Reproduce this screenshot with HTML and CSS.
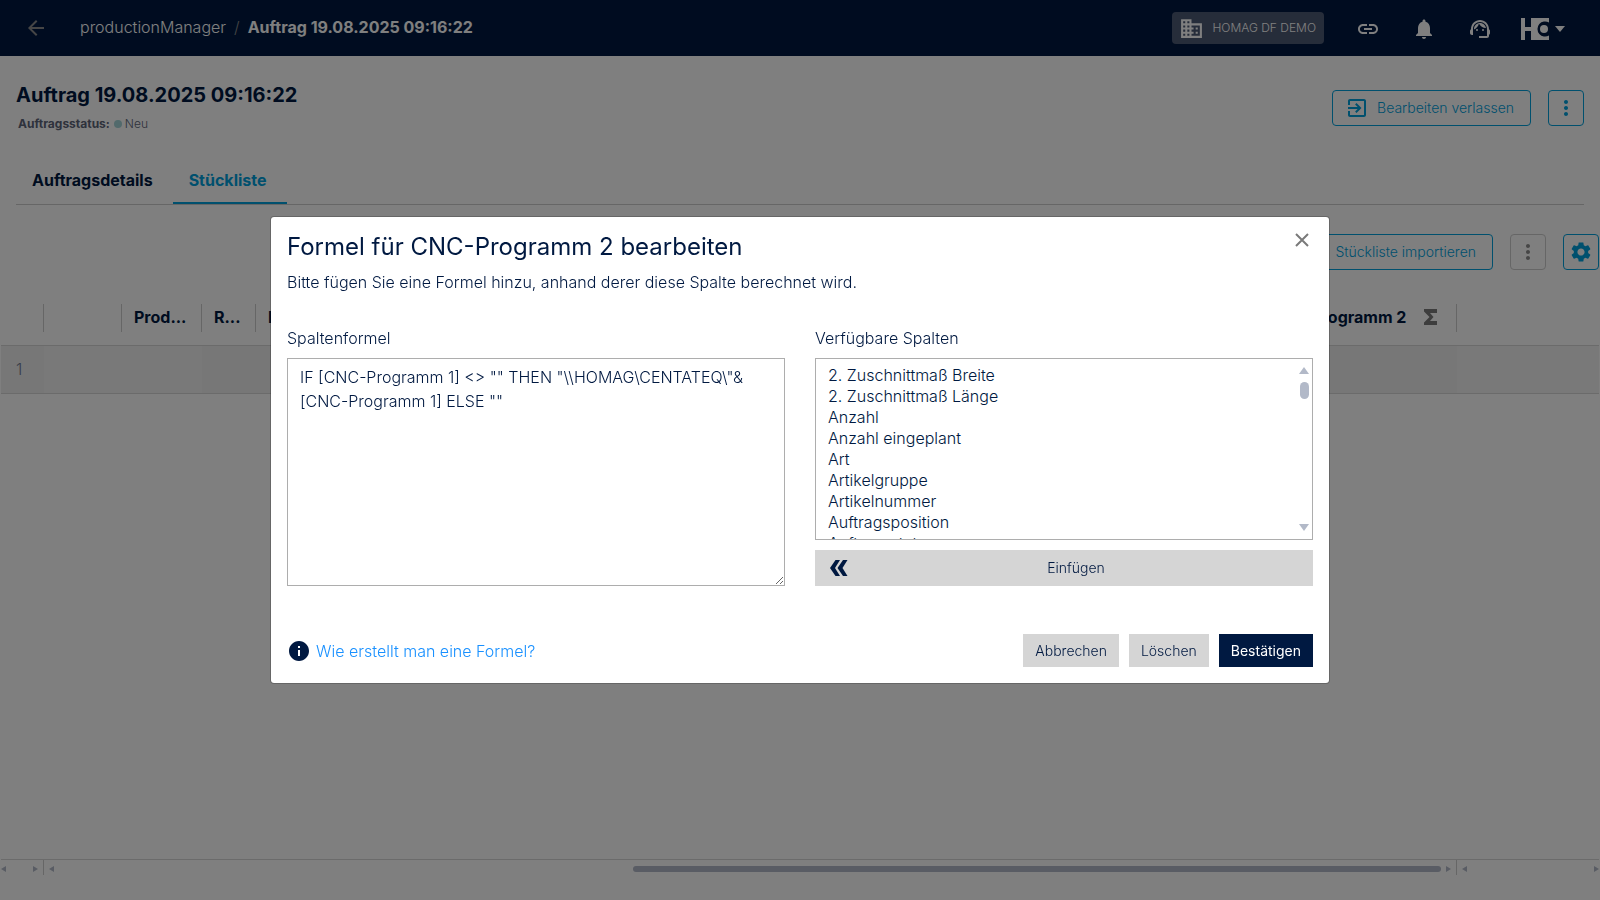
FILE: index.html
```html
<!DOCTYPE html>
<html lang="de">
<head>
  <meta charset="utf-8">
  <meta name="viewport" content="width=device-width, initial-scale=1">
  <title>productionManager</title>
  <link rel="stylesheet" href="styles.css">
</head>
<body>

<div class="app">
  <header class="topbar">
    <button class="icon-btn back" aria-label="Zurück">
      <svg width="24" height="24" viewBox="0 0 24 24"><path d="M20 11H7.83l5.59-5.59L12 4l-8 8 8 8 1.41-1.41L7.83 13H20v-2z"/></svg>
    </button>
    <nav class="breadcrumb">
      <a href="#">productionManager</a>
      <span class="slash">/</span>
      <strong>Auftrag 19.08.2025 09:16:22</strong>
    </nav>
    <button class="tenant">
      <svg width="25" height="25" viewBox="0 0 24 24"><path d="M12 7V3H2v18h20V7H12zM6 19H4v-2h2v2zm0-4H4v-2h2v2zm0-4H4V9h2v2zm0-4H4V5h2v2zm4 12H8v-2h2v2zm0-4H8v-2h2v2zm0-4H8V9h2v2zm0-4H8V5h2v2zm10 12h-8v-2h2v-2h-2v-2h2v-2h-2V9h8v10zm-2-8h-2v2h2v-2zm0 4h-2v2h2v-2z"/></svg>
      HOMAG DF DEMO
    </button>
    <div class="topbar-icons">
      <button class="icon-btn" aria-label="Links">
        <svg width="24" height="24" viewBox="0 0 24 24"><path d="M3.9 12c0-1.71 1.39-3.1 3.1-3.1h4V7H7c-2.76 0-5 2.24-5 5s2.24 5 5 5h4v-1.900H7c-1.710 0-3.100-1.390-3.100-3.100zM8 13h8v-2H8v2zm9-6h-4v1.900h4c1.710 0 3.100 1.390 3.100 3.100s-1.390 3.100-3.100 3.100h-4V17h4c2.760 0 5-2.240 5-5s-2.240-5-5-5z"/></svg>
      </button>
      <button class="icon-btn" aria-label="Benachrichtigungen">
        <svg width="24" height="24" viewBox="0 0 24 24"><path d="M12 22c1.100 0 2-.9 2-2h-4c0 1.100.89 2 2 2zm6-6v-5c0-3.070-1.640-5.640-4.500-6.320V4c0-.83-.67-1.500-1.500-1.500s-1.500.67-1.500 1.500v.68C7.630 5.360 6 7.920 6 11v5l-2 2v1h16v-1l-2-2z"/></svg>
      </button>
      <button class="icon-btn" aria-label="Support">
        <svg width="24" height="24" viewBox="0 0 24 24"><path d="M21 12.220C21 6.730 16.740 3 12 3c-4.690 0-9 3.650-9 9.280-.6.340-1 .98-1 1.720v2c0 1.100.9 2 2 2h1v-6.100c0-3.870 3.130-7 7-7s7 3.130 7 7V19h-8v2h8c1.100 0 2-.9 2-2v-1.220c.59-.31 1-.92 1-1.640v-2.300c0-.7-.41-1.310-1-1.620z"/><circle cx="9" cy="13" r="1"/><circle cx="15" cy="13" r="1"/><path d="M18 11.030C17.520 8.180 15.040 6 12.050 6c-3.030 0-6.290 2.510-6.030 6.450 2.470-1.010 4.330-3.210 4.860-5.890 1.310 2.630 4 4.440 7.120 4.470z"/></svg>
      </button>
      <button class="icon-btn logo" aria-label="HOMAG">
        <svg width="28" height="22" viewBox="0 0 28 22"><path d="M0 0h4v9h6V0h18v4.500A7.600 7.600 0 1 0 28 17.500V22H10v-9H4v9H0z"/><circle cx="23" cy="11" r="4"/></svg>
        <svg width="10" height="6" viewBox="0 0 10 6"><path d="M0 0h10L5 6z"/></svg>
      </button>
    </div>
  </header>

  <section class="order-head">
    <div>
      <h1>Auftrag 19.08.2025 09:16:22</h1>
      <p class="status"><b>Auftragsstatus:</b><span class="dot"></span>Neu</p>
    </div>
    <div class="order-actions">
      <button class="btn-outline">
        <svg width="24" height="24" viewBox="0 0 24 24"><path d="M10.090 15.590L11.500 17l5-5-5-5-1.410 1.410L12.670 11H3v2h9.670l-2.580 2.590zM19 3H5c-1.110 0-2 .9-2 2v4h2V5h14v14H5v-4H3v4c0 1.100.89 2 2 2h14c1.100 0 2-.9 2-2V5c0-1.100-.9-2-2-2z"/></svg>
        Bearbeiten verlassen
      </button>
      <button class="btn-outline square" aria-label="Mehr">
        <svg width="24" height="24" viewBox="0 0 24 24"><path d="M12 8c1.100 0 2-.9 2-2s-.9-2-2-2-2 .9-2 2 .9 2 2 2zm0 2c-1.100 0-2 .9-2 2s.9 2 2 2 2-.9 2-2-.9-2-2-2zm0 6c-1.100 0-2 .9-2 2s.9 2 2 2 2-.9 2-2-.9-2-2-2z"/></svg>
      </button>
    </div>
  </section>

  <nav class="tabs">
    <a href="#">Auftragsdetails</a>
    <a href="#" class="active">Stückliste</a>
  </nav>

  <div class="toolbar">
    <button class="btn-outline">Stückliste importieren</button>
    <button class="btn-outline square muted" aria-label="Mehr" disabled>
      <svg width="24" height="24" viewBox="0 0 24 24"><path d="M12 8c1.100 0 2-.9 2-2s-.9-2-2-2-2 .9-2 2 .9 2 2 2zm0 2c-1.100 0-2 .9-2 2s.9 2 2 2 2-.9 2-2-.9-2-2-2zm0 6c-1.100 0-2 .9-2 2s.9 2 2 2 2-.9 2-2-.9-2-2-2z"/></svg>
    </button>
    <button class="btn-outline square" aria-label="Einstellungen">
      <svg width="24" height="24" viewBox="0 0 24 24"><path d="M19.140 12.940c.04-.3.060-.61.060-.94 0-.32-.02-.64-.07-.94l2.030-1.580c.18-.14.230-.41.120-.61l-1.920-3.320c-.12-.22-.37-.29-.59-.22l-2.390.96c-.5-.38-1.030-.7-1.620-.94l-.36-2.540c-.04-.24-.24-.41-.48-.41h-3.840c-.24 0-.43.170-.47.410l-.36 2.540c-.59.240-1.130.570-1.620.940l-2.390-.96c-.22-.08-.47 0-.59.220L2.740 8.870c-.12.210-.08.470.120.610l2.030 1.580c-.05.300-.09.630-.09.940s.02.640.07.940l-2.030 1.580c-.18.140-.23.410-.12.610l1.920 3.320c.12.220.37.290.59.220l2.390-.96c.5.380 1.030.7 1.620.94l.36 2.540c.05.240.24.410.48.410h3.840c.24 0 .44-.17.470-.41l.36-2.540c.59-.24 1.130-.56 1.620-.94l2.390.96c.22.080.47 0 .59-.22l1.920-3.320c.12-.22.070-.47-.12-.61l-2.010-1.580zM12 15.600c-1.980 0-3.600-1.620-3.600-3.600s1.620-3.600 3.600-3.600 3.600 1.620 3.600 3.600-1.620 3.600-3.600 3.600z"/></svg>
    </button>
  </div>

  <main class="grid">
    <table>
      <colgroup>
        <col class="c-num"><col class="c-tools"><col class="c-prod"><col class="c-r"><col><col class="c-cnc"><col class="c-end">
      </colgroup>
      <thead>
        <tr>
          <th><div class="th"></div></th>
          <th><div class="th"></div></th>
          <th><div class="th">Prod...</div></th>
          <th><div class="th">R...</div></th>
          <th><div class="th">L</div></th>
          <th><div class="th">CNC-Programm 2
            <svg width="13" height="16" viewBox="0 0 13 16"><path d="M0 0h13v4H6L9.500 8 6 12h7v4H0v-2.500L5.500 8 0 2.500z"/></svg></div></th>
          <th></th>
        </tr>
      </thead>
      <tbody>
        <tr>
          <td class="num">1</td>
          <td class="fixed"></td>
          <td class="fixed"></td>
          <td></td>
          <td></td>
          <td></td>
          <td class="fixed"></td>
        </tr>
      </tbody>
    </table>
  </main>

  <div class="hscroll" aria-hidden="true">
    <div class="track left"><i class="arr l"></i><i class="arr r"></i></div>
    <div class="track middle"><i class="arr l"></i><span class="thumb"></span><i class="arr r"></i></div>
    <div class="track right"><i class="arr l"></i><i class="arr r"></i></div>
  </div>
</div>

<div class="backdrop">
  <div class="modal" role="dialog" aria-modal="true" aria-labelledby="dlg-title">
    <div class="modal-head">
      <div>
        <h2 id="dlg-title">Formel für CNC-Programm 2 bearbeiten</h2>
        <p>Bitte fügen Sie eine Formel hinzu, anhand derer diese Spalte berechnet wird.</p>
      </div>
      <button class="icon-btn close" aria-label="Schließen">
        <svg width="14" height="14" viewBox="0 0 14 14"><path d="M1 1l12 12M13 1L1 13"/></svg>
      </button>
    </div>

    <div class="modal-body">
      <div class="field">
        <label for="formula">Spaltenformel</label>
        <textarea id="formula" spellcheck="false">IF [CNC-Programm 1] &lt;&gt; "" THEN "\\HOMAG\CENTATEQ\"&amp;[CNC-Programm 1] ELSE ""</textarea>
      </div>
      <div class="field">
        <label for="columns">Verfügbare Spalten</label>
        <div class="list">
          <select id="columns" size="8">
            <option>2. Zuschnittmaß Breite</option>
            <option>2. Zuschnittmaß Länge</option>
            <option>Anzahl</option>
            <option>Anzahl eingeplant</option>
            <option>Art</option>
            <option>Artikelgruppe</option>
            <option>Artikelnummer</option>
            <option>Auftragsposition</option>
            <option>Auftragsstatus</option>
          </select>
          <div class="vscroll" aria-hidden="true"><i class="arr u"></i><span class="thumb"></span><i class="arr d"></i></div>
        </div>
        <button class="btn insert">
          <svg width="18" height="16" viewBox="0 0 18 16"><path d="M5.500 0H10L5 8l5 8H5.500L0 8zM13 0h4.500l-5 8 5 8H13L7.500 8z"/></svg>
          <span>Einfügen</span>
        </button>
      </div>
    </div>

    <div class="modal-foot">
      <a class="help" href="#">
        <svg width="24" height="24" viewBox="0 0 24 24"><path d="M12 2C6.480 2 2 6.480 2 12s4.480 10 10 10 10-4.480 10-10S17.520 2 12 2zm1 15h-2v-6h2v6zm0-8h-2V7h2v2z"/></svg>
        Wie erstellt man eine Formel?
      </a>
      <button class="btn">Abbrechen</button>
      <button class="btn">Löschen</button>
      <button class="btn primary">Bestätigen</button>
    </div>
  </div>
</div>

</body>
</html>
```
FILE: styles.css
```css
* {
  box-sizing: border-box;
}
body {
  margin: 0;
  font-family: Inter, "Liberation Sans", sans-serif;
  font-size: 16px;
  font-weight: 300;
  line-height: 24px;
  color: #001941;
  background: #fff;
}
h1, h2, p {
  margin: 0;
}
a {
  color: inherit;
  text-decoration: none;
}
button {
  font: inherit;
  color: inherit;
  cursor: pointer;
}
svg {
  display: block;
  flex: none;
  fill: currentColor;
}
.app {
  display: flex;
  flex-direction: column;
  height: 100vh;
  overflow: hidden;
}

/* top bar */
.topbar {
  display: flex;
  align-items: center;
  height: 56px;
  flex: none;
  padding: 0 35px 0 24px;
  background: #001941;
  color: #fff;
}
.icon-btn {
  display: flex;
  align-items: center;
  padding: 0;
  border: 0;
  background: none;
}
.back {
  color: #8c8c8c;
}
.breadcrumb {
  display: flex;
  gap: 8px;
  margin-left: 32px;
  padding-bottom: 2px;
}
.breadcrumb strong {
  font-weight: 700;
}
.slash {
  color: #8c8c8c;
}
.tenant {
  display: flex;
  align-items: center;
  gap: 8px;
  height: 32px;
  margin-left: auto;
  padding: 0 8px 0 7px;
  border: 0;
  border-radius: 4px;
  background: #4d5a74;
  font-size: 12px;
}
.topbar-icons {
  display: flex;
  align-items: center;
  gap: 32px;
  padding: 2px 0 0 32px;
}
.logo {
  gap: 6px;
  margin-left: -3px;
}

/* order header */
.order-head {
  display: flex;
  justify-content: space-between;
  align-items: flex-end;
  padding: 27px 16px 0;
}
h1 {
  font-size: 20px;
  font-weight: 700;
}
.status {
  display: flex;
  align-items: center;
  margin-top: 5px;
  padding-left: 2px;
  font-size: 12px;
  color: #5c6478;
}
.status b {
  font-weight: 700;
}
.dot {
  width: 8px;
  height: 8px;
  margin: 0 3px 0 4px;
  border-radius: 50%;
  background: #a4d4d8;
}
.order-actions {
  display: flex;
  gap: 17px;
  padding-bottom: 10px;
}
.btn-outline {
  display: flex;
  align-items: center;
  gap: 8px;
  height: 36px;
  padding: 0 16px 0 12px;
  border: 1px solid #00a0dc;
  border-radius: 4px;
  background: none;
  color: #00a0dc;
  font-size: 14px;
}
.btn-outline.square {
  justify-content: center;
  width: 36px;
  padding: 0;
}
.btn-outline.muted {
  border-color: #ccc;
  color: #8c8c8c;
}

/* tabs */
.tabs {
  display: flex;
  margin: 24px 16px 0;
  border-bottom: 1px solid #ccc;
  font-weight: 700;
}
.tabs a {
  padding: 8px 20px 10px 16px;
  border-bottom: 2px solid transparent;
}
.tabs .active {
  color: #00a0dc;
  border-color: #00a0dc;
}

.toolbar {
  display: flex;
  justify-content: flex-end;
  gap: 17px;
  margin-top: 29px;
  padding-right: 1px;
}

/* parts list */
.grid {
  flex: 1;
  margin: 17px 1px 0;
}
table {
  width: 100%;
  table-layout: fixed;
  border-collapse: collapse;
}
.c-num { width: 43px; }
.c-tools { width: 78px; }
.c-prod { width: 80px; }
.c-r { width: 54px; }
.c-cnc { width: 201px; }
.c-end { width: 142px; }
th {
  height: 58px;
  padding: 4px 0 0;
  font-weight: 700;
  text-align: left;
}
.th {
  display: flex;
  align-items: center;
  justify-content: flex-start;
  gap: 18px;
  height: 28px;
  padding: 0 0 2px 12px;
  border-right: 1px solid #ccc;
  white-space: nowrap;
}
.th svg {
  color: #7a7a7a;
}
td {
  height: 48px;
  padding: 0 15px;
  border: solid #d6d6d6;
  border-width: 1px 0;
  background: #eee;
}
td.fixed {
  background: #f2f2f2;
}
td.num {
  color: #707c94;
}

/* scrollbars */
.hscroll {
  display: flex;
  height: 41px;
  flex: none;
  margin: 0 1px;
  border-top: 1px solid #d6d6d6;
}
.track {
  display: flex;
  align-items: center;
  justify-content: space-between;
  height: 15px;
  padding: 3px 5px 0;
}
.track.left {
  width: 43px;
  padding-left: 0;
  border-right: 1px solid #ccc;
}
.track.middle {
  flex: 1;
  border-right: 1px solid #ccc;
}
.track.right {
  width: 142px;
  padding-right: 0;
}
.hscroll .thumb {
  width: 808px;
  height: 6px;
  margin: 0 5px 0 auto;
  border-radius: 3px;
  background: #b2b9c8;
}
.arr {
  width: 0;
  height: 0;
  border: 3px solid transparent;
}
.arr.l {
  border-left-width: 0;
  border-right: 5px solid #b2b9c8;
}
.arr.r {
  border-right-width: 0;
  border-left: 5px solid #b2b9c8;
}
.arr.u {
  border-width: 0 5px 7px;
  border-bottom-color: #b2b9c8;
}
.arr.d {
  border-width: 7px 5px 0;
  border-top-color: #b2b9c8;
}

/* dialog */
.backdrop {
  position: fixed;
  inset: 0;
  display: flex;
  align-items: center;
  justify-content: center;
  background: rgba(0, 0, 0, .5);
}
.modal {
  width: 100%;
  max-width: 1060px;
  padding: 16px;
  border: 1px solid rgba(0, 0, 0, .2);
  border-radius: 4px;
  background: #fff;
  background-clip: padding-box;
}
.modal-head {
  display: flex;
  justify-content: space-between;
  align-items: flex-start;
}
h2 {
  font-size: 24px;
  font-weight: 400;
  line-height: 28px;
}
.modal-head p {
  margin-top: 9px;
}
.close {
  padding: 0 4px;
}
.close svg {
  fill: none;
  stroke: #7a7a7a;
  stroke-width: 2;
}
.modal-body {
  display: grid;
  grid-template-columns: 1fr 1fr;
  gap: 30px;
  margin-top: 32px;
}
.field {
  display: flex;
  flex-direction: column;
}
label {
  margin-bottom: 8px;
}
textarea, select {
  width: 100%;
  border: 1px solid #adadad;
  border-radius: 0;
  outline: 0;
  background: #fff;
  font: inherit;
  color: inherit;
}
textarea {
  display: block;
  height: 228px;
  padding: 6px 12px;
  resize: both;
}
.list {
  position: relative;
}
select {
  display: block;
  height: 182px;
  padding: 6px 12px;
  overflow-y: scroll;
  scrollbar-width: none;
}
option {
  height: 21px;
  min-height: 21px;
  padding: 0;
  font-weight: 300;
  line-height: 21px;
}
/* thin scrollbar drawn over the right edge of the list */
.vscroll {
  position: absolute;
  top: 9px;
  right: 4px;
  bottom: 9px;
  display: flex;
  flex-direction: column;
  align-items: center;
}
.vscroll .thumb {
  width: 9px;
  height: 17px;
  margin: 8px 0 auto;
  border-radius: 5px;
  background: #b2b9c8;
}
.btn {
  height: 33px;
  padding: 0 12px;
  border: 0;
  background: #d5d5d5;
  font-size: 14px;
}
.btn.primary {
  background: #001941;
  color: #fff;
  font-weight: 400;
}
.insert {
  display: flex;
  align-items: center;
  height: 36px;
  margin-top: 10px;
  padding: 0 15px;
}
.insert span {
  flex: 1;
  padding: 0 0 1px 6px;
}
.modal-foot {
  display: flex;
  align-items: center;
  gap: 10px;
  margin-top: 48px;
}
.help {
  display: flex;
  align-items: center;
  gap: 5px;
  margin-right: auto;
  color: #1890ff;
}
.help svg {
  color: #001941;
}
```
